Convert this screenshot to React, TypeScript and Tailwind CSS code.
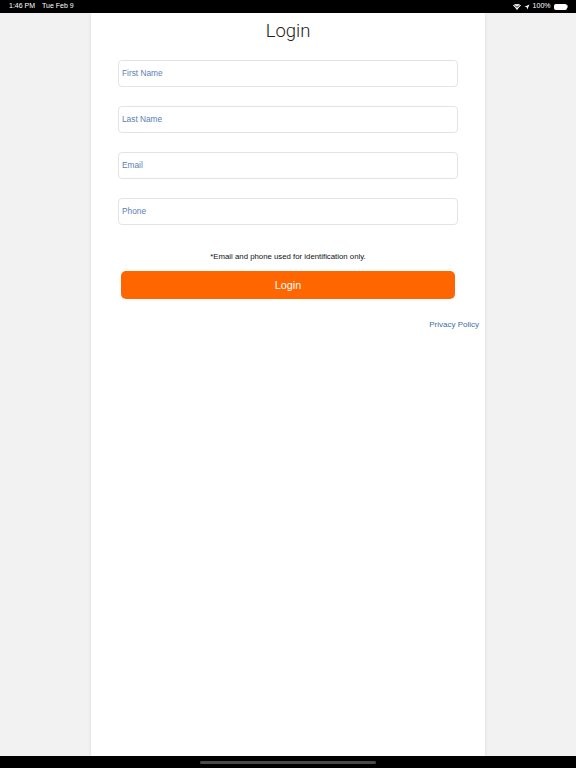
export default function App() {
  const fields = ['First Name', 'Last Name', 'Email', 'Phone'];

  return (
    <div className="flex h-[768px] w-[576px] flex-col bg-[#f2f2f2] font-['Liberation_Sans',Arial,sans-serif]">
      {/* status bar */}
      <div className="flex h-[13px] items-center justify-between bg-black pl-[9px] pr-[8px] text-[7px] text-white">
        <div className="flex gap-[7px]">
          <span>1:46 PM</span>
          <span>Tue Feb 9</span>
        </div>
        <div className="flex items-center gap-[3px]">
          <svg width="8" height="6" viewBox="0 0 16 12" fill="white">
            <path d="M8 12 5.2 8.8a4 4 0 0 1 5.6 0Z" />
            <path d="M3.6 7.1a6.4 6.4 0 0 1 8.8 0l-1.2 1.3a4.6 4.6 0 0 0-6.4 0Z" />
            <path d="M1.6 5A9.4 9.4 0 0 1 14.4 5l-1.2 1.3a7.6 7.6 0 0 0-10.4 0Z" />
            <path d="M0 3A11.6 11.6 0 0 1 16 3l-1.2 1.3A9.8 9.8 0 0 0 1.2 4.3Z" />
          </svg>
          <svg width="6" height="6" viewBox="0 0 12 12" fill="white">
            <path d="M11 1 1 5.5l4.6.9.9 4.6Z" />
          </svg>
          <span>100%</span>
          <div className="flex items-center">
            <div className="h-[6px] w-[13px] rounded-[1.5px] border border-white bg-white" />
            <div className="ml-[0.5px] h-[2.5px] w-[1px] rounded-r-[1px] bg-white/60" />
          </div>
        </div>
      </div>

      {/* page */}
      <div className="flex flex-1 justify-center">
        <div className="flex w-[394px] flex-col bg-white shadow-[0_0_3px_rgba(0,0,0,0.12)]">
          <h1 className="mt-[7px] text-center font-['Roboto',sans-serif] text-[18.5px] font-light leading-[22px] text-[#222]">
            Login
          </h1>

          <div className="mt-[18px] flex flex-col gap-[19.5px] px-[27px]">
            {fields.map((f) => (
              <div
                key={f}
                className="flex h-[26.5px] items-center rounded-[4px] border-[1.5px] border-[#e3e3e3] px-[3px] text-[8.3px] text-[#5a80b4]"
              >
                {f}
              </div>
            ))}
          </div>

          <p className="mt-[26px] text-center text-[7.8px] text-[#111]">
            *Email and phone used for identification only.
          </p>

          <div className="mt-[9px] px-[30px]">
            <button className="flex h-[28px] w-full items-center justify-center rounded-[5px] bg-[#ff6600] text-[10.8px] text-white">
              Login
            </button>
          </div>

          <div className="mt-[20px] flex justify-end pr-[6px]">
            <span className="text-[8px] text-[#3d6ea8]">Privacy Policy</span>
          </div>
        </div>
      </div>

      {/* home indicator */}
      <div className="flex h-[12px] items-center justify-center bg-black">
        <div className="h-[3px] w-[176px] rounded-full bg-[#4a4a4a]" />
      </div>
    </div>
  );
}
